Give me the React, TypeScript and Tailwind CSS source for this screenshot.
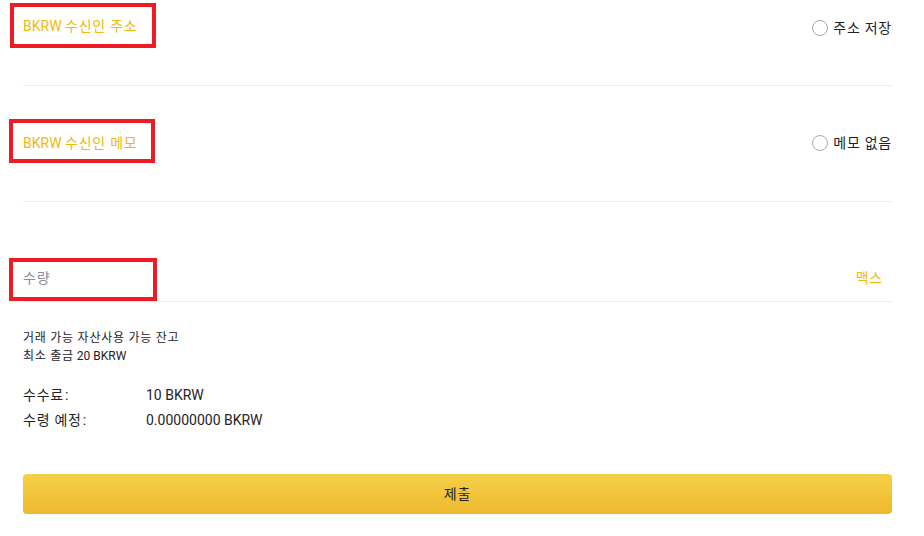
import React from "react";

const font = { fontFamily: "Roboto, 'Noto Sans CJK KR', 'Noto Sans', sans-serif" };

function K({ children }: { children: React.ReactNode }) {
  return <span className="tracking-[0.75px]">{children}</span>;
}

function Radio({ label }: { label: string }) {
  return (
    <div className="flex items-center gap-[5px] text-[14px] leading-[20px] text-[#1e2329]">
      <span className="shrink-0 w-[16px] h-[16px] rounded-full border-[1.5px] border-[#a3a9b1] bg-white" />
      <K>{label}</K>
    </div>
  );
}

export default function App() {
  return (
    <div className="w-[924px] h-[536px] bg-white overflow-hidden" style={font}>
      <div className="pl-[23px] pr-[32px]">
        <div className="h-[86px] pt-[16px] border-b border-[#eaecef] flex justify-between items-start">
          <div className="relative text-[14px] leading-[20px] text-[#f0b90b]">
            <span className="absolute left-[-13px] top-[-13px] w-[146px] h-[45px] border-[4px] border-[#ed1c24]" />
            BKRW <K>수신인 주소</K>
          </div>
          <div className="pt-[2px]">
            <Radio label="주소 저장" />
          </div>
        </div>
        <div className="h-[116px] pt-[47px] border-b border-[#eaecef] flex justify-between items-start">
          <div className="relative text-[14px] leading-[20px] text-[#f0b90b]">
            <span className="absolute left-[-14px] top-[-14px] w-[146px] h-[44px] border-[4px] border-[#ed1c24]" />
            BKRW <K>수신인 메모</K>
          </div>
          <div>
            <Radio label="메모 없음" />
          </div>
        </div>
        <div className="h-[100px] pt-[66px] border-b border-[#eaecef] flex justify-between items-start">
          <div className="relative text-[14px] leading-[20px] text-[#848e9c]">
            <span className="absolute left-[-14px] top-[-10px] w-[148px] h-[43px] border-[4px] border-[#ed1c24]" />
            <K>수량</K>
          </div>
          <div className="text-[14px] leading-[20px] text-[#f0b90b] pr-[9px]">
            <K>맥스</K>
          </div>
        </div>
        <div className="mt-[27px] text-[12px] leading-[18px] text-[#1e2329]">
          <div>
            <K>거래 가능 자산사용 가능 잔고</K>
          </div>
          <div>
            <K>최소 출금</K> 20 BKRW
          </div>
        </div>
        <div className="mt-[18px] text-[14px] leading-[25px] text-[#1e2329]">
          <div className="flex">
            <span className="w-[123px]">
              <K>수수료</K>
              <span className="ml-[1px]">:</span>
            </span>
            <span>10 BKRW</span>
          </div>
          <div className="flex">
            <span className="w-[123px]">
              <K>수령 예정</K>
              <span className="ml-[1px]">:</span>
            </span>
            <span>0.00000000 BKRW</span>
          </div>
        </div>
        <button className="mt-[41px] w-full h-[40px] rounded-[4px] bg-gradient-to-b from-[#f6d048] to-[#eeb92e] text-[14px] text-[#1e2329] flex items-center justify-center">
          <K>제출</K>
        </button>
      </div>
    </div>
  );
}
